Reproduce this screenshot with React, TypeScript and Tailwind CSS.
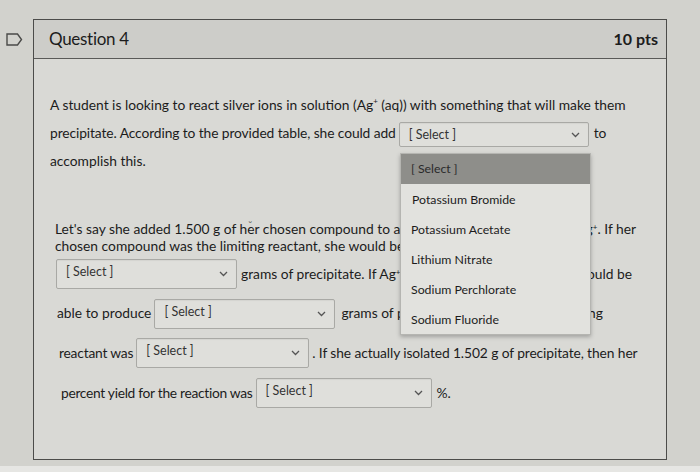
import React from "react";

function Chevron() {
  return (
    <svg width="9" height="6" viewBox="0 0 9 6" className="shrink-0">
      <path d="M1 1 L4.5 4.5 L8 1" fill="none" stroke="#555" strokeWidth="1.3" />
    </svg>
  );
}

function Select({ w, h = 30 }: { w: string; h?: number }) {
  return (
    <div
      className={`${w} flex items-center justify-between border border-[#a9a9a5] bg-[#dfdfdb] rounded-[2px] pl-[9px] pr-[8px] shrink-0 shadow-[inset_0_1px_1px_rgba(0,0,0,0.05)]`}
      style={{ height: h }}
    >
      <span className="text-[12.5px] text-[#333] self-start mt-[3px]">[ Select ]</span>
      <Chevron />
    </div>
  );
}

export default function App() {
  return (
    <div
      className="relative w-[700px] h-[472px] overflow-hidden bg-[#d2d2cd] text-[#1c1c1c] flex"
      style={{ fontFamily: "Lato, 'Open Sans', sans-serif" }}
    >
      <div className="w-[33px] shrink-0 pt-[33px] pl-[6px]">
        <svg width="17" height="13" viewBox="0 0 17 13">
          <path d="M1 1 H11.5 L15.5 6.5 L11.5 12 H1 Z" fill="none" stroke="#4a4a48" strokeWidth="1.4" />
        </svg>
      </div>
      <div className="mt-[19px] w-[634px] h-[441px] border border-[#4c4c4a] bg-[#d9d9d5] flex flex-col shrink-0">
        <div className="h-[39px] bg-[#cdcdc9] border-b border-[#5a5a58] flex items-center justify-between pl-[15px] pr-[8px]">
          <span className="text-[17px] tracking-[-0.3px]">Question 4</span>
          <span className="text-[16px] font-bold">10 pts</span>
        </div>
        <div className="relative flex flex-col pl-[16px] pt-[32px] text-[13.8px]">
          <div className="h-[28px] flex items-center whitespace-nowrap">
            A student is looking to react silver ions in solution (Ag<sup className="text-[8px]">+</sup>&nbsp;(aq)) with something that will make them
          </div>
          <div className="h-[28px] flex items-center whitespace-nowrap">
            <span className="tracking-[-0.1px]">precipitate. According to the provided table, she could add</span>
            <div className="ml-[3px] mt-[3px]">
              <Select w="w-[190px]" h={25} />
            </div>
            <span className="ml-[5px]">to</span>
          </div>
          <div className="h-[28px] flex items-center whitespace-nowrap">accomplish this.</div>

          <div className="mt-[46px] pl-[5px] pr-[30px] h-[17px] flex items-center whitespace-nowrap">
            <span className="flex-1 min-w-0 overflow-hidden">
              Let's say she added 1.500 g of h<span className="relative">e<span className="absolute left-[1px] -top-[3px] text-[#444] text-[10px]">˘</span></span>r chosen compound to a solution containing excess
            </span>
            <span className="shrink-0 ml-[8px]">
              Ag<sup className="text-[8px]">+</sup>. If her
            </span>
          </div>
          <div className="pl-[5px] h-[17px] flex items-center whitespace-nowrap overflow-hidden">
            chosen compound was the limiting reactant, she would be able to produce
          </div>
          <div className="mt-[4px] pl-[6px] pr-[34px] h-[30px] flex items-center whitespace-nowrap">
            <Select w="w-[181px]" />
            <span className="ml-[4px] flex-1 min-w-0 overflow-hidden">
              grams of precipitate. If Ag<sup className="text-[8px]">+</sup> was the limiting reactant, she
            </span>
            <span className="shrink-0 ml-[4px]">would be</span>
          </div>
          <div className="mt-[9px] pl-[7px] pr-[63px] h-[31px] flex items-center whitespace-nowrap">
            <span className="mr-[3px]">able to produce</span>
            <Select w="w-[181px]" />
            <span className="ml-[6px] flex-1 min-w-0 overflow-hidden">grams of precipitate. The</span>
            <span className="shrink-0 ml-[4px]">limiting</span>
          </div>
          <div className="mt-[9px] pl-[9px] h-[30px] flex items-center whitespace-nowrap">
            <span className="mr-[3px] tracking-[-0.2px]">reactant was</span>
            <Select w="w-[173px]" />
            <span className="ml-[3px] tracking-[-0.1px]">. If she actually isolated 1.502 g of precipitate, then her</span>
          </div>
          <div className="mt-[10px] pl-[11px] h-[30px] flex items-center whitespace-nowrap">
            <span className="mr-[3px] tracking-[-0.3px]">percent yield for the reaction was</span>
            <Select w="w-[176px]" />
            <span className="ml-[5px]">%.</span>
          </div>

          <div className="absolute left-[366px] top-[94px] w-[191px] bg-[#e2e2de] border border-[#b5b5b1] shadow-[0_2px_4px_rgba(0,0,0,0.25)] text-[12.3px] whitespace-nowrap">
            <div className="h-[30px] bg-[#8e8e8a] flex items-center pl-[10px] text-[#2a2a2a]">[ Select ]</div>
            <div className="h-[30px] flex items-center pl-[11px] pt-[2px]">Potassium Bromide</div>
            <div className="h-[30px] flex items-center pl-[10px] pt-[2px]">Potassium Acetate</div>
            <div className="h-[30px] flex items-center pl-[10px] pt-[2px]">Lithium Nitrate</div>
            <div className="h-[30px] flex items-center pl-[10px] pt-[2px]">Sodium Perchlorate</div>
            <div className="h-[30px] flex items-center pl-[10px] pt-[2px]">Sodium Fluoride</div>
          </div>
        </div>
      </div>
      <div className="absolute left-0 right-0 bottom-0 h-[6px] bg-[#e6e6e3]"></div>
    </div>
  );
}
